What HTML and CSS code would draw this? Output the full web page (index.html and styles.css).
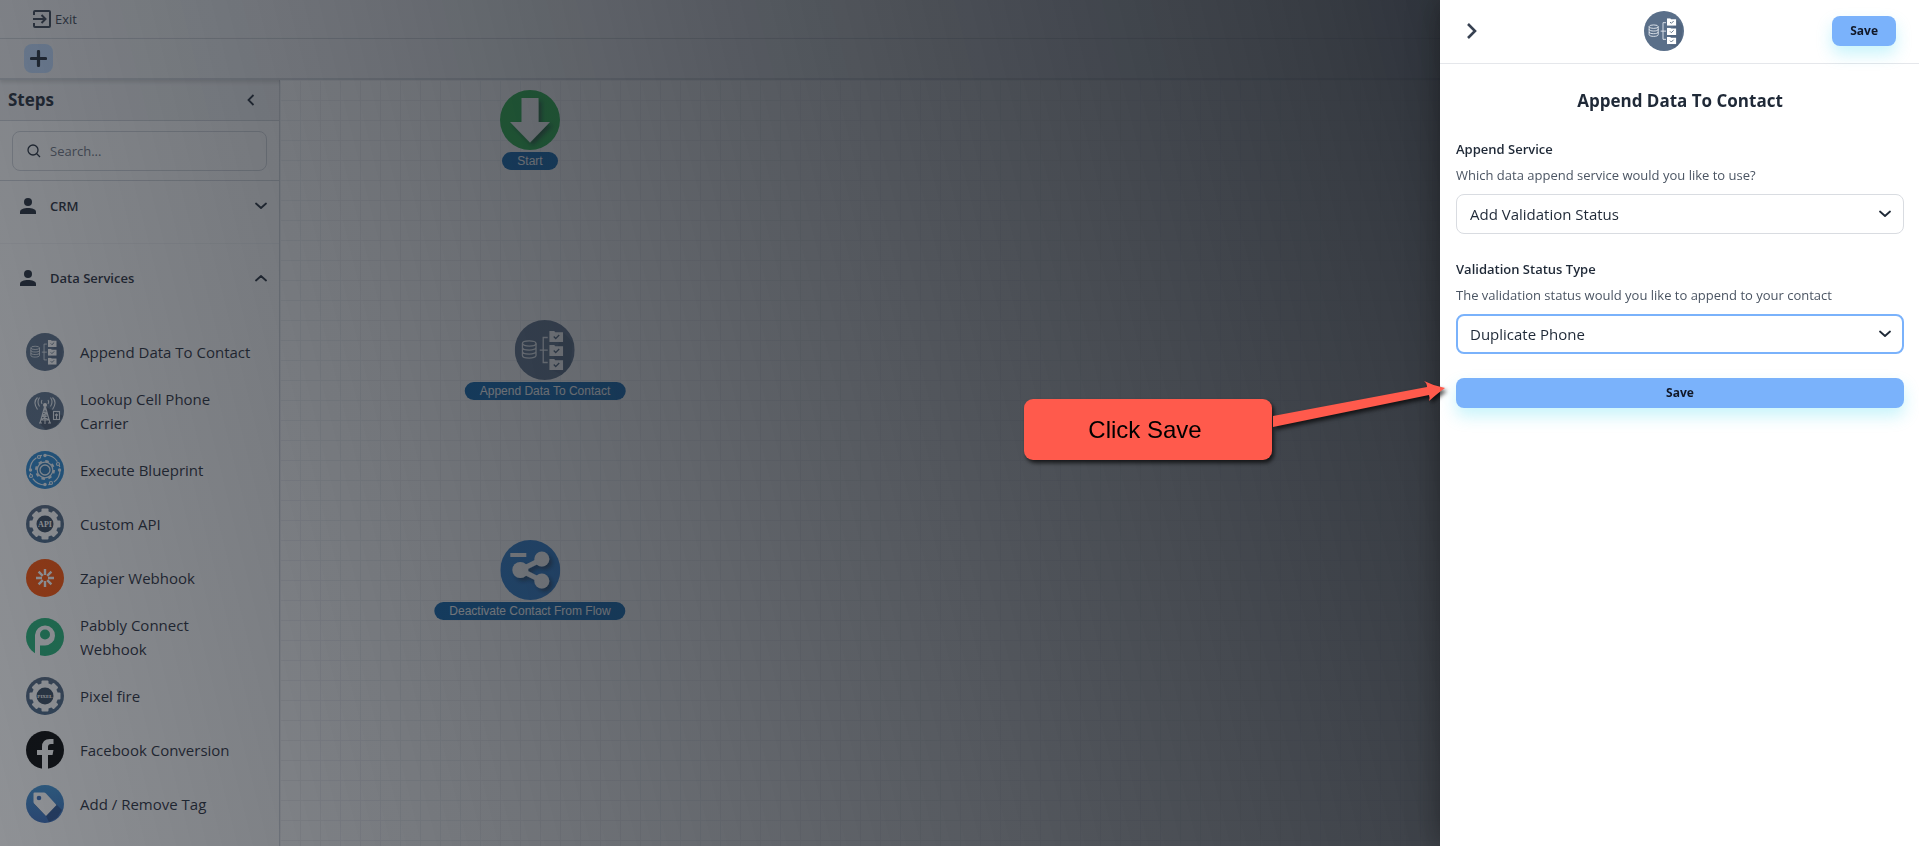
FILE: index.html
```
<!DOCTYPE html>
<html lang="en">
<head>
  <meta charset="UTF-8" />
  <meta name="viewport" content="width=device-width, initial-scale=1" />
  <title>Flow Builder</title>
  <link rel="stylesheet" href="styles.css">
</head>
<body>
  <svg class="sprite" aria-hidden="true">
    <defs>
      <linearGradient id="blueFill" x1="0" y1="0" x2="0" y2="1">
        <stop offset="0" stop-color="#3c8fd0" />
        <stop offset="1" stop-color="#3569b8" />
      </linearGradient>
      <linearGradient id="steelFill" x1="0" y1="0" x2="0" y2="1">
        <stop offset="0" stop-color="#50637c" />
        <stop offset="1" stop-color="#446384" />
      </linearGradient>
      <filter id="soft" x="-50%" y="-50%" width="200%" height="200%">
        <feDropShadow dx="3" dy="3" stdDeviation="2" flood-color="#0a1a2c" flood-opacity="0.6" />
      </filter>
    </defs>
    <symbol id="folder" viewBox="0 0 14 11">
      <path d="M0 0h5l1 1.300h8V11H0z" fill="#fff" />
      <path d="M4.500 5.500l2 2 3.500-3.500" fill="none" stroke="#4c6178" stroke-width="1.300" />
    </symbol>
    <symbol id="append" viewBox="0 0 60 60">
      <circle cx="30" cy="30" r="30" fill="#5a6f89" />
      <path d="M48 12l10 10-2 23-9 10-12-6z" fill="#465a73" opacity="0.500" />
      <g fill="none" stroke="#e9eef3" stroke-width="1.300">
        <ellipse cx="14.500" cy="23.500" rx="6.800" ry="2.600" />
        <path d="M7.700 23.500v12c0 3.400 13.600 3.400 13.600 0v-12M7.700 27.500c0 3.400 13.600 3.400 13.600 0M7.700 31.500c0 3.400 13.600 3.400 13.600 0" />
        <path d="M33 17.500h-4.500v25H33M25 30.200h8" />
      </g>
      <use href="#folder" x="34.500" y="11" width="14" height="11" />
      <use href="#folder" x="34.500" y="25" width="14" height="11" />
      <use href="#folder" x="34.500" y="39" width="14" height="11" />
    </symbol>
    <symbol id="gear" viewBox="0 0 38 38">
      <circle cx="19" cy="19" r="19" fill="url(#steelFill)" />
      <g fill="#fff">
        <circle cx="19" cy="19" r="13" />
        <rect x="15.500" y="3.500" width="7" height="31" rx="1" />
        <rect x="15.500" y="3.500" width="7" height="31" rx="1" transform="rotate(45 19 19)" />
        <rect x="15.500" y="3.500" width="7" height="31" rx="1" transform="rotate(90 19 19)" />
        <rect x="15.500" y="3.500" width="7" height="31" rx="1" transform="rotate(135 19 19)" />
      </g>
      <circle cx="19" cy="19" r="8.500" fill="#34465b" />
    </symbol>
    <symbol id="person" viewBox="0 0 16 16">
      <circle cx="8" cy="4" r="4" fill="currentColor" />
      <path d="M0 16v-2c0-3 4-4 8-4s8 1 8 4v2z" fill="currentColor" />
    </symbol>
    <symbol id="chevron" viewBox="0 0 12 12">
      <path d="M1 3.500l5 4.500 5-4.500" fill="none" stroke="currentColor" stroke-width="1.800" stroke-linecap="round" stroke-linejoin="round" />
    </symbol>
  </svg>

  <div class="app">
    <header class="topbar">
      <a class="exit" href="#">
        <svg width="18" height="18" viewBox="0 0 18 18" fill="none" stroke="currentColor" stroke-width="2">
          <path d="M1 5V2q0-1 1-1h14q1 0 1 1v14q0 1-1 1H2q-1 0-1-1v-3M0 9h12M8.500 5l4 4-4 4" />
        </svg>
        Exit
      </a>
    </header>
    <div class="toolbar">
      <button class="add-btn" type="button" aria-label="Add step">
        <svg width="17" height="17" viewBox="0 0 17 17"><path d="M8.500 1.500v14M1.500 8.500h14" stroke="currentColor" stroke-width="3.200" stroke-linecap="round" /></svg>
      </button>
    </div>

    <div class="workspace">
      <aside class="sidebar">
        <div class="sidebar-head">
          <h2>Steps</h2>
          <button class="collapse" type="button" aria-label="Collapse steps">
            <svg width="8" height="12" viewBox="0 0 8 12"><path d="M6.500 1L1.500 6l5 5" fill="none" stroke="currentColor" stroke-width="1.800" /></svg>
          </button>
        </div>
        <div class="search">
          <label class="search-box">
            <svg width="14" height="14" viewBox="0 0 14 14" fill="none" stroke="currentColor" stroke-width="1.300"><circle cx="6" cy="6" r="5" /><path d="M9.500 9.500l3.500 3.500" /></svg>
            <input type="text" placeholder="Search..." aria-label="Search steps" />
          </label>
        </div>
        <button class="group" type="button">
          <svg class="group-icon"><use href="#person" /></svg>
          <span>CRM</span>
          <svg class="chev"><use href="#chevron" /></svg>
        </button>
        <button class="group open" type="button">
          <svg class="group-icon"><use href="#person" /></svg>
          <span>Data Services</span>
          <svg class="chev"><use href="#chevron" /></svg>
        </button>
        <ul class="steps">
          <li>
            <svg class="step-icon"><use href="#append" /></svg>
            <span>Append Data To Contact</span>
          </li>
          <li>
            <svg class="step-icon" viewBox="0 0 38 38">
              <circle cx="19" cy="19" r="19" fill="#5a6f89" />
              <path d="M20 15l17 9-7 10-10 4-6-6z" fill="#3a4656" opacity="0.600" />
              <g fill="none" stroke="#e9eef3" stroke-width="1.100">
                <path d="M18.500 15l-4.500 16M19.500 15l4.500 16M17 20l5 3M21 20l-5 4M22 23l-7 5M16 24l7 4M13 31h3M22 31h3M19 15v17M15.500 24h7M14.500 28h9" />
                <path d="M16 12q-1.500-2 0-4M22 12q1.500-2 0-4M13.500 14.500q-3-4.500 0-9M24.500 14.500q3-4.500 0-9M11.500 17.500q-5-7.500 0-12M26.500 17.500q5-7.500 0-12" />
                <rect x="27.500" y="19.500" width="6" height="8" />
                <path d="M30.500 27v-4M29 23.500l1.500-1.500 1.500 1.500" />
              </g>
              <circle cx="19" cy="13" r="2" fill="#fff" />
            </svg>
            <span>Lookup Cell Phone Carrier</span>
          </li>
          <li>
            <svg class="step-icon" viewBox="0 0 38 38">
              <circle cx="19" cy="19" r="19" fill="#2786d0" />
              <circle cx="19" cy="19" r="15" fill="none" stroke="#e9f3fb" stroke-width="1.200" stroke-dasharray="14 3.500 2.500 3.560" />
              <g fill="#2786d0" stroke="#e9f3fb" stroke-width="1.200">
                <circle cx="13" cy="6" r="1.500" /><circle cx="32" cy="13" r="1.500" /><circle cx="25" cy="32" r="1.500" /><circle cx="5" cy="25" r="1.500" />
              </g>
              <g fill="#e9f3fb"><circle cx="19" cy="4.500" r="1.700" /><circle cx="33.500" cy="19" r="1.700" /><circle cx="19" cy="33.500" r="1.700" /><circle cx="4.500" cy="19" r="1.700" /></g>
              <circle cx="19" cy="19" r="9" fill="none" stroke="#e9f3fb" stroke-width="2" stroke-dasharray="3.500 3.570" />
              <circle cx="19" cy="19" r="7.800" fill="#2f78b4" stroke="#e9f3fb" stroke-width="1.200" />
              <circle cx="19" cy="19" r="5" fill="none" stroke="#e9f3fb" stroke-width="1.300" />
            </svg>
            <span>Execute Blueprint</span>
          </li>
          <li>
            <svg class="step-icon" viewBox="0 0 38 38">
              <use href="#gear" />
              <text class="gear-text" x="19" y="22">API</text>
            </svg>
            <span>Custom API</span>
          </li>
          <li>
            <svg class="step-icon" viewBox="0 0 38 38">
              <circle cx="19" cy="19" r="19" fill="#ff4f00" />
              <path d="M19 10v6M19 22v6M10 19h6M22 19h6M12.600 12.600l4.200 4.200M21.200 21.200l4.200 4.200M12.600 25.400l4.200-4.200M21.200 16.800l4.200-4.200" stroke="#fff" stroke-width="2.400" />
            </svg>
            <span>Zapier Webhook</span>
          </li>
          <li>
            <svg class="step-icon" viewBox="0 0 38 38">
              <circle cx="19" cy="19" r="19" fill="#20b276" />
              <path d="M9 36V17a10 10 0 1 1 10 10.500h-5V38q-3-.500-5-2z" fill="#fff" />
              <circle cx="19" cy="16.500" r="5" fill="#20b276" />
            </svg>
            <span>Pabbly Connect Webhook</span>
          </li>
          <li>
            <svg class="step-icon" viewBox="0 0 38 38">
              <use href="#gear" />
              <text class="gear-text small" x="19" y="21">PIXEL</text>
            </svg>
            <span>Pixel fire</span>
          </li>
          <li>
            <svg class="step-icon" viewBox="0 0 38 38">
              <circle cx="19" cy="19" r="19" fill="#000" />
              <path d="M16 38V24h-5v-5h5v-3q0-8 8-8h3.500v5H25q-3 0-3 3v3h5.500l-1 5H22v14z" fill="#fff" />
            </svg>
            <span>Facebook Conversion</span>
          </li>
          <li>
            <svg class="step-icon" viewBox="0 0 38 38">
              <circle cx="19" cy="19" r="19" fill="url(#blueFill)" />
              <path d="M8 19l12 12 3 6 8-4 5-8-6-6z" fill="#23457f" opacity="0.700" />
              <path d="M8.500 7.500h9.500q1 0 2 1L30.500 20 20 31 8.500 19q-1-1-1-2V8.500q0-1 1-1z" fill="#fff" />
              <circle cx="13" cy="13" r="2.300" fill="#3569b8" />
            </svg>
            <span>Add / Remove Tag</span>
          </li>
        </ul>
      </aside>

      <main class="canvas">
        <div class="node node-start">
          <svg class="node-icon" viewBox="0 0 60 60">
            <circle cx="30" cy="30" r="30" fill="#1fb043" />
            <path d="M21.500 8h17v24H50L30 52.500 10 32h11.500z" fill="#fff" filter="url(#soft)" />
          </svg>
          <span>Start</span>
        </div>
        <div class="node node-append">
          <svg class="node-icon"><use href="#append" /></svg>
          <span>Append Data To Contact</span>
        </div>
        <div class="node node-deactivate">
          <svg class="node-icon" viewBox="0 0 60 60">
            <circle cx="30" cy="30" r="30" fill="#2478cc" />
            <g fill="#fff" stroke="#fff" filter="url(#soft)">
              <path d="M42 19L20 30l22 11" fill="none" stroke-width="5" />
              <circle cx="41.500" cy="19" r="7.500" stroke="none" /><circle cx="20" cy="30" r="8" stroke="none" /><circle cx="41.500" cy="41" r="7.500" stroke="none" />
            </g>
            <path d="M10 13h16v4H10z" fill="#fff" />
          </svg>
          <span>Deactivate Contact From Flow</span>
        </div>
      </main>
    </div>
  </div>

  <div class="backdrop"></div>

  <section class="drawer">
    <header class="drawer-head">
      <button class="close" type="button" aria-label="Close panel">
        <svg width="12" height="18" viewBox="0 0 12 18"><path d="M2 2l7 7-7 7" fill="none" stroke="currentColor" stroke-width="2.600" /></svg>
      </button>
      <svg class="drawer-icon"><use href="#append" /></svg>
      <button class="save" type="button">Save</button>
    </header>
    <form class="drawer-body">
      <h1>Append Data To Contact</h1>
      <div class="field">
        <label for="service">Append Service</label>
        <p>Which data append service would you like to use?</p>
        <div class="select-wrap">
          <select id="service"><option>Add Validation Status</option></select>
          <svg class="chev"><use href="#chevron" /></svg>
        </div>
      </div>
      <div class="field">
        <label for="statusType">Validation Status Type</label>
        <p>The validation status would you like to append to your contact</p>
        <div class="select-wrap">
          <select id="statusType" class="active"><option>Duplicate Phone</option></select>
          <svg class="chev"><use href="#chevron" /></svg>
        </div>
      </div>
      <button class="save" type="button">Save</button>
    </form>
  </section>

  <div class="callout">Click Save</div>
  <svg class="arrow" width="180" height="60" viewBox="0 0 180 60">
    <path d="M3 35L157 6q0-4-3-6 10 5 21 7-7 5-16 13 1-4 0-6L3 46z" fill="#ff5a4c" />
  </svg>
</body>
</html>
```
FILE: styles.css
```
* {
  box-sizing: border-box;
}
body {
  margin: 0;
  font-family: "Open Sans", "Noto Sans", sans-serif;
  font-size: 15px;
  line-height: 24px;
  color: #1f2937;
  overflow: hidden;
}
button, input, select {
  font: inherit;
  color: inherit;
}
button {
  border: none;
  background: none;
  padding: 0;
  cursor: pointer;
}
h1, h2, p, ul {
  margin: 0;
  padding: 0;
}
svg {
  flex: none;
}
.sprite {
  position: absolute;
  width: 0;
  height: 0;
}

.app {
  display: flex;
  flex-direction: column;
  height: 100vh;
  background: #fff;
}
.topbar {
  display: flex;
  align-items: center;
  height: 39px;
  padding: 0 33px;
  background: #f3f4f6;
  border-bottom: 1px solid #d1d5db;
}
.exit {
  display: flex;
  align-items: center;
  gap: 4px;
  font-size: 13px;
  font-weight: 500;
  color: #374151;
  text-decoration: none;
}
.toolbar {
  display: flex;
  align-items: center;
  height: 41px;
  padding: 0 24px;
  background: #f3f4f6;
  border-bottom: 2px solid #d1d5db;
  box-shadow: 0 2px 4px rgba(0,0,0,0.15);
  position: relative;
}
.add-btn {
  display: flex;
  align-items: center;
  justify-content: center;
  width: 29px;
  height: 29px;
  border-radius: 8px;
  background: #bfdbfe;
}
.workspace {
  display: flex;
  flex: 1;
  min-height: 0;
}

/* sidebar */
.sidebar {
  flex: none;
  width: 280px;
  border-right: 1px solid #d1d5db;
  overflow: hidden;
}
.sidebar-head {
  display: flex;
  align-items: center;
  justify-content: space-between;
  height: 41px;
  padding: 0 24px 0 8px;
  background: #f3f4f6;
  border-bottom: 1px solid #d1d5db;
}
.sidebar-head h2 {
  font-size: 17px;
  font-weight: 700;
}
.collapse {
  display: flex;
}
.search {
  padding: 10px 12px 9px;
  border-bottom: 1px solid #d1d5db;
}
.search-box {
  display: flex;
  align-items: center;
  gap: 9px;
  height: 40px;
  padding: 0 14px;
  border: 1px solid #d1d5db;
  border-radius: 8px;
}
.search-box input {
  flex: 1;
  min-width: 0;
  padding: 0;
  border: none;
  background: none;
  font-size: 13px;
  outline: none;
}
.search-box input::placeholder {
  color: #6b7280;
}
.group {
  display: flex;
  align-items: center;
  gap: 14px;
  width: 100%;
  height: 50px;
  padding: 0 12px 0 20px;
  font-size: 13px;
  font-weight: 600;
  text-align: left;
}
.group span {
  flex: 1;
}
.group-icon {
  width: 16px;
  height: 16px;
}
.group.open {
  height: 60px;
  margin-top: 12px;
  padding-top: 8px;
  border-top: 1px solid #f3f4f6;
}
.group.open .chev {
  transform: rotate(180deg);
}
.chev {
  width: 12px;
  height: 12px;
}
.steps {
  list-style: none;
  padding: 22px 24px 0 26px;
}
.steps li {
  display: flex;
  align-items: center;
  gap: 16px;
  padding: 8px 0;
}
.step-icon {
  width: 38px;
  height: 38px;
}
.steps span {
  max-width: 176px;
}
.gear-text {
  font: bold 8px "Liberation Serif", serif;
  fill: #fff;
  text-anchor: middle;
}
.gear-text.small {
  font-size: 5px;
}

/* flow canvas */
.canvas {
  position: relative;
  flex: 1;
  background-color: #fff;
  background-image:
    linear-gradient(#f0f1f4 1px, transparent 1px),
    linear-gradient(90deg, #f0f1f4 1px, transparent 1px);
  background-size: 20px 20px;
}
.node {
  position: absolute;
  display: flex;
  flex-direction: column;
  align-items: center;
  gap: 2px;
  transform: translateX(-50%);
}
.node-start {
  left: 250px;
  top: 10px;
}
.node-append {
  left: 265px;
  top: 240px;
}
.node-deactivate {
  left: 250px;
  top: 460px;
}
.node-icon {
  width: 60px;
  height: 60px;
}
.node span {
  padding: 0 15px;
  border-radius: 9px;
  background: #0562b0;
  color: #fff;
  font-family: "Liberation Sans", Arial, sans-serif;
  font-size: 12px;
  line-height: 18px;
  white-space: nowrap;
}

.backdrop {
  position: fixed;
  inset: 0;
  background: linear-gradient(76deg,
    rgba(31,36,44,0.5) 0%,
    rgba(31,36,44,0.6) 18%,
    rgba(31,36,44,0.67) 31%,
    rgba(31,36,44,0.75) 45%,
    rgba(31,36,44,0.79) 52%,
    rgba(31,36,44,0.84) 62%,
    rgba(31,36,44,0.89) 72%,
    rgba(31,36,44,0.93) 78%);
}

/* drawer */
.drawer {
  position: fixed;
  top: 0;
  right: 0;
  bottom: 0;
  width: 479px;
  background: #fff;
  box-shadow: 0 0 30px rgba(0,0,0,0.4);
}
.drawer-head {
  display: flex;
  align-items: center;
  justify-content: space-between;
  height: 64px;
  padding: 0 23px 1px 26px;
  border-bottom: 1px solid #e5e7eb;
}
.close {
  display: flex;
  width: 30px;
  color: #374151;
}
.drawer-icon {
  width: 40px;
  height: 40px;
}
.save {
  height: 30px;
  padding: 0 18px;
  border-radius: 8px;
  background: #7ab2fb;
  box-shadow: 0 8px 16px rgba(34,211,238,0.25);
  color: #111827;
  font-size: 12px;
  font-weight: 700;
}
.drawer-body {
  display: flex;
  flex-direction: column;
  gap: 24px;
  padding: 24px 15px 24px 16px;
}
.drawer-body h1 {
  font-size: 17px;
  line-height: 26px;
  font-weight: 700;
  text-align: center;
}
.field label {
  display: block;
  font-size: 13px;
  line-height: 22px;
  font-weight: 600;
}
.field p {
  margin: 4px 0 8px;
  font-size: 13px;
  line-height: 22px;
  color: #4b5563;
}
.select-wrap {
  display: flex;
  align-items: center;
}
.select-wrap select {
  flex: 1;
  height: 40px;
  padding: 0 13px;
  border: 1px solid #d9dce1;
  border-radius: 8px;
  background: #fff;
  appearance: none;
}
.select-wrap select.active {
  border: 2px solid #7ab2fb;
  padding: 0 12px;
}
.select-wrap .chev {
  margin-left: -25px;
  margin-right: 13px;
  pointer-events: none;
}

/* guide callout */
.callout {
  position: fixed;
  top: 399px;
  right: 647px;
  width: 248px;
  padding: 18px 6px 18px 0;
  border-radius: 9px;
  background: #ff5a4c;
  box-shadow: 2px 3px 4px rgba(0,0,0,0.7);
  color: #000;
  font-family: "Liberation Sans", Arial, sans-serif;
  font-size: 24px;
  line-height: 25px;
  text-align: center;
}
.arrow {
  position: fixed;
  top: 381px;
  right: 469px;
  filter: drop-shadow(2px 3px 2px rgba(0,0,0,0.7));
}
```
